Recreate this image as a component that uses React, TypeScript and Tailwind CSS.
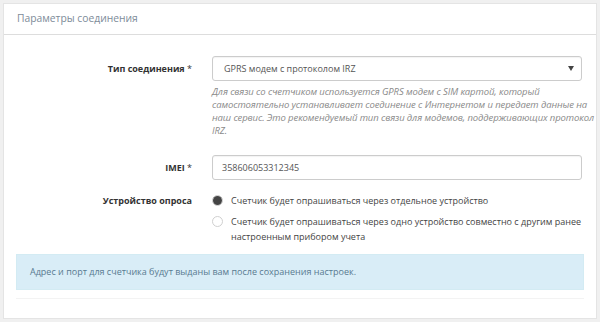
export default function App() {
    return (
        <div className="w-[600px] h-[322px] bg-[#f0f0f0] p-[3px] font-['Open_Sans',sans-serif] text-[#333]">
            <div className="bg-white border border-[#e4e4e4] h-[316px] flex flex-col">
                {/* Header */}
                <div className="h-[31px] border-b border-[#dddddd] px-[13px] flex items-center">
                    <span className="text-[10.3px] text-[#7d8b99]">Параметры соединения</span>
                </div>

                {/* Body */}
                <div className="px-[12px] pt-[21px] flex flex-col">
                    {/* Тип соединения */}
                    <div className="flex">
                        <div className="w-[184px] pr-[8px] text-right text-[9px] font-bold leading-[25px]">
                            Тип соединения <span className="font-normal">*</span>
                        </div>
                        <div className="ml-[12px] w-[370px]">
                            <div className="h-[25px] border border-[#cccccc] rounded-[3px] flex items-center justify-between px-[11px] shadow-[inset_0_1px_1px_rgba(0,0,0,0.05)]">
                                <span className="text-[9px] text-[#555]">GPRS модем с протоколом IRZ</span>
                                <svg width="6" height="5" viewBox="0 0 6 5" className="mr-[-4px]"><path d="M0 0h6L3 5z" fill="#444" /></svg>
                            </div>
                            <p className="mt-[4px] text-[9.5px] italic leading-[13px] text-[#8a8a8a] whitespace-nowrap tracking-[-0.1px]">
                                Для связи со счетчиком используется GPRS модем с SIM картой, который<br />
                                самостоятельно устанавливает соединение с Интернетом и передает данные на<br />
                                наш сервис. Это рекомендуемый тип связи для модемов, поддерживающих протокол<br />
                                IRZ.
                            </p>
                        </div>
                    </div>

                    {/* IMEI */}
                    <div className="flex mt-[18px]">
                        <div className="w-[184px] pr-[8px] text-right text-[9px] font-bold leading-[25px]">
                            IMEI <span className="font-normal">*</span>
                        </div>
                        <div className="ml-[12px] w-[370px] h-[25px] border border-[#cccccc] rounded-[3px] flex items-center px-[9px] shadow-[inset_0_1px_1px_rgba(0,0,0,0.05)]">
                            <span className="text-[9px] text-[#555]">358606053312345</span>
                        </div>
                    </div>

                    {/* Устройство опроса */}
                    <div className="flex mt-[13px]">
                        <div className="w-[184px] pr-[8px] text-right text-[9px] font-bold leading-[16px]">
                            Устройство опроса
                        </div>
                        <div className="ml-[12px] w-[370px] flex flex-col gap-[6px] text-[9px] text-[#444] leading-[15px]">
                            <div className="flex items-start gap-[8px]">
                                <span className="mt-[2px] w-[11px] h-[11px] rounded-full border border-[#c8c8c8] flex items-center justify-center shrink-0">
                                    <span className="w-[9px] h-[9px] rounded-full bg-[#444]" />
                                </span>
                                <span>Счетчик будет опрашиваться через отдельное устройство</span>
                            </div>
                            <div className="flex items-start gap-[8px]">
                                <span className="mt-[2px] w-[11px] h-[11px] rounded-full border border-[#d0d0d0] shrink-0" />
                                <span>Счетчик будет опрашиваться через одно устройство совместно с другим ранее<br />настроенным прибором учета</span>
                            </div>
                        </div>
                    </div>

                    {/* Alert */}
                    <div className="mt-[10px] h-[36px] bg-[#d9edf7] border border-[#d3ebf3] flex items-center px-[13px]">
                        <span className="text-[9px] text-[#587a90]">Адрес и порт для счетчика будут выданы вам после сохранения настроек.</span>
                    </div>
                    <div className="mt-[8px] border-t border-[#f3f3f3]" />
                </div>
            </div>
        </div>
    )
}
